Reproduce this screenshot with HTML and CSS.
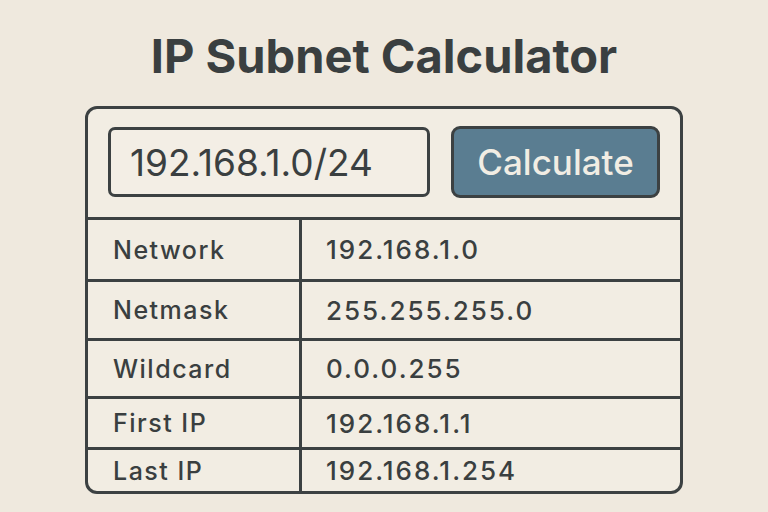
FILE: index.html
```html
<!DOCTYPE html>
<html>
<head>
<meta charset="utf-8">
<link rel="stylesheet" href="styles.css">
</head>
<body>
<h1 class="title">IP Subnet Calculator</h1>
<div class="card">
  <div class="controls">
    <div class="input">192.168.1.0/24</div>
    <div class="button">Calculate</div>
  </div>
  <div class="table">
    <div class="row"><div class="label">Network</div><div class="value">192.168.1.0</div></div>
    <div class="row"><div class="label">Netmask</div><div class="value">255.255.255.0</div></div>
    <div class="row"><div class="label">Wildcard</div><div class="value">0.0.0.255</div></div>
    <div class="row"><div class="label">First IP</div><div class="value">192.168.1.1</div></div>
    <div class="row"><div class="label">Last IP</div><div class="value">192.168.1.254</div></div>
  </div>
</div>
</body>
</html>
```
FILE: styles.css
```css
* { box-sizing: border-box; }
html, body { margin: 0; padding: 0; }
body {
  width: 768px;
  height: 512px;
  background: #efe9de;
  font-family: Inter, "Liberation Sans", sans-serif;
  color: #3a3f40;
  overflow: hidden;
}
.title {
  margin: 0;
  padding-top: 28px;
  height: 106px;
  text-align: center;
  font-size: 47px;
  font-weight: 700;
  line-height: 56px;
  color: #3a3f40;
}
.card {
  margin-left: 85px;
  width: 598px;
  height: 388px;
  border: 3px solid #3c4142;
  border-radius: 12px;
  background: #f2ede3;
  overflow: hidden;
}
.controls {
  display: flex;
  align-items: flex-start;
  gap: 21px;
  padding: 18px 20px 0 20px;
  height: 108px;
}
.input {
  width: 322px;
  height: 70px;
  border: 3px solid #3c4142;
  border-radius: 7px;
  background: #f3eee5;
  display: flex;
  align-items: center;
  padding-left: 19px;
  font-size: 37px;
  color: #3a3f40;
}
.button {
  margin-top: -1px;
  width: 209px;
  height: 72px;
  border: 3px solid #3c4142;
  border-radius: 9px;
  background: #5a7d91;
  color: #f1ede4;
  display: flex;
  align-items: center;
  justify-content: center;
  font-size: 35px;
  font-weight: 500;
}
.row {
  display: flex;
  border-top: 3px solid #3c4142;
}
.row:nth-child(1) { height: 62px; }
.row:nth-child(2) { height: 59px; }
.row:nth-child(3) { height: 58px; }
.row:nth-child(4) { height: 51px; }
.row:nth-child(5) { height: 46px; padding-bottom: 2px; }
.label {
  width: 214px;
  border-right: 3px solid #3c4142;
  display: flex;
  align-items: center;
  padding-left: 25px;
  font-size: 25px;
  font-weight: 500;
  letter-spacing: 1.5px;
}
.value {
  display: flex;
  align-items: center;
  padding-left: 24px;
  font-size: 26px;
  font-weight: 500;
  letter-spacing: 2px;
}
```
